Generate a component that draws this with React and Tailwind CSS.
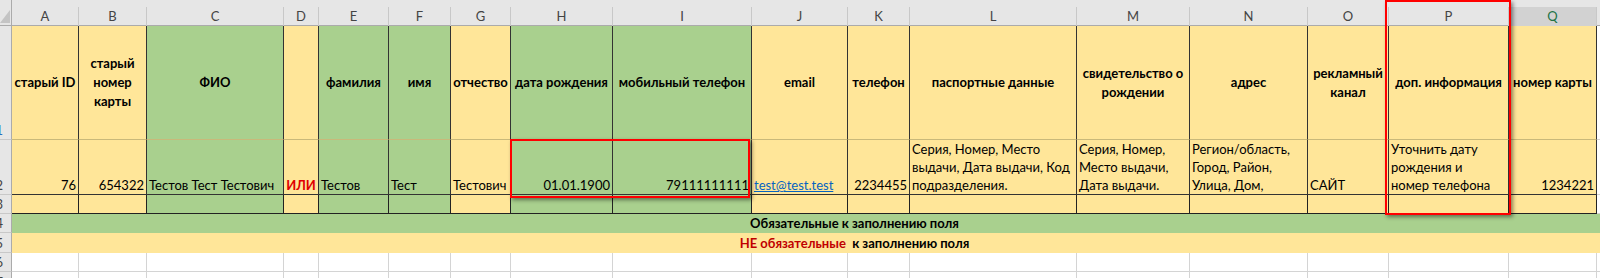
import React from 'react';

const YELLOW = 'bg-[#ffe699]';
const GREEN = 'bg-[#a9d08e]';

// колонки листа: буква, заливка строк 1-3
const columns = [
    { letter: 'A', fill: 'y' },
    { letter: 'B', fill: 'y' },
    { letter: 'C', fill: 'g' },
    { letter: 'D', fill: 'y' },
    { letter: 'E', fill: 'g' },
    { letter: 'F', fill: 'g' },
    { letter: 'G', fill: 'y' },
    { letter: 'H', fill: 'g' },
    { letter: 'I', fill: 'g' },
    { letter: 'J', fill: 'y' },
    { letter: 'K', fill: 'y' },
    { letter: 'L', fill: 'y' },
    { letter: 'M', fill: 'y' },
    { letter: 'N', fill: 'y' },
    { letter: 'O', fill: 'y' },
    { letter: 'P', fill: 'y' },
    { letter: 'Q', fill: 'y' },
    { letter: 'R', fill: 'w' },
];

const headers = [
    ['старый ID'],
    ['старый', 'номер', 'карты'],
    ['ФИО'],
    [],
    ['фамилия'],
    ['имя'],
    ['отчество'],
    ['дата рождения'],
    ['мобильный телефон'],
    ['email'],
    ['телефон'],
    ['паспортные данные'],
    ['свидетельство о', 'рождении'],
    ['адрес'],
    ['рекламный', 'канал'],
    ['доп. информация'],
    ['номер карты'],
    [],
];

const values = [
    { lines: ['76'], align: 'right' },
    { lines: ['654322'], align: 'right' },
    { lines: ['Тестов Тест Тестович'], align: 'left' },
    { lines: ['ИЛИ'], align: 'center', red: true },
    { lines: ['Тестов'], align: 'left' },
    { lines: ['Тест'], align: 'left' },
    { lines: ['Тестович'], align: 'left' },
    { lines: ['01.01.1900'], align: 'right' },
    { lines: ['79111111111'], align: 'right' },
    { lines: ['test@test.test'], align: 'left', link: true },
    { lines: ['2234455'], align: 'right' },
    { lines: ['Серия, Номер, Место', 'выдачи, Дата выдачи, Код', 'подразделения.'], align: 'left' },
    { lines: ['Серия, Номер,', 'Место выдачи,', 'Дата выдачи.'], align: 'left' },
    { lines: ['Регион/область,', 'Город, Район,', 'Улица, Дом,'], align: 'left' },
    { lines: ['САЙТ'], align: 'left' },
    { lines: ['Уточнить дату', 'рождения и', 'номер телефона'], align: 'left' },
    { lines: ['1234221'], align: 'right' },
    { lines: [], align: 'left' },
];

const fillClass = (fill) => (fill === 'y' ? YELLOW : fill === 'g' ? GREEN : 'bg-white');

const alignClass = {
    left: 'items-start text-left',
    right: 'items-end text-right',
    center: 'items-center text-center',
};

const RowNumber = ({ n, blue }) => (
    <div className="bg-[#e6e6e6] border-r border-b border-r-[#ababab] border-b-[#c8c8c8] flex justify-end items-end pr-[8px] overflow-hidden">
        <span className={`leading-[17px] ${blue ? 'text-[#2a6ebb]' : 'text-[#444]'}`}>{n}</span>
    </div>
);

const App = () => {
    return (
        <div className="w-[1600px] h-[278px] overflow-hidden bg-white relative font-['Lato','Open_Sans',sans-serif] text-[13px] text-black">
            <div className="grid grid-cols-[12px_67px_68px_137px_35px_70px_62px_60px_102px_139px_96px_62px_167px_113px_118px_81px_120px_88px_100px] grid-rows-[26px_114px_55px_19px_19px_20px_19px_20px] w-[1697px]">
                {/* заголовки столбцов */}
                <div className="bg-[#e6e6e6] border-b border-r border-[#ababab] flex items-end">
                    <svg width="11" height="14" viewBox="0 0 11 14" className="mb-[1px]">
                        <polygon points="10,0 10,13 0,13" fill="#c4c4c4" />
                    </svg>
                </div>
                {columns.map((col) =>
                    col.letter === 'Q' ? (
                        <div key={col.letter} className="bg-[#e6e6e6] flex flex-col border-b-2 border-[#217346]">
                            <div className="mt-[7px] flex-1 bg-[#d2d2d2] border-r border-[#c8c8c8] flex items-center justify-center text-[#217346]">
                                {col.letter}
                            </div>
                        </div>
                    ) : (
                        <div key={col.letter} className="bg-[#e6e6e6] flex flex-col border-b border-[#ababab]">
                            <div className="mt-[7px] flex-1 border-r border-[#c8c8c8] flex items-center justify-center text-[#444]">
                                {col.letter}
                            </div>
                        </div>
                    )
                )}

                {/* строка 1: шапка таблицы */}
                <RowNumber n="1" blue />
                {columns.map((col, i) => (
                    <div
                        key={'h' + col.letter}
                        className={`${fillClass(col.fill)} ${col.fill === 'w' ? 'border-r border-b border-[#d4d4d4]' : 'border-r border-r-[#333] border-b border-b-[#c9b97a]'} flex flex-col items-center justify-center text-center font-bold leading-[19px] whitespace-nowrap overflow-hidden`}
                    >
                        {headers[i].map((t) => (
                            <div key={t}>{t}</div>
                        ))}
                    </div>
                ))}

                {/* строка 2: пример данных */}
                <RowNumber n="2" />
                {columns.map((col, i) => {
                    const v = values[i];
                    return (
                        <div
                            key={'v' + col.letter}
                            className={`${fillClass(col.fill)} ${col.fill === 'w' ? 'border-r border-b border-[#d4d4d4]' : 'border-r border-b border-[#333]'} flex flex-col justify-end ${alignClass[v.align]} px-[2px] leading-[18px] whitespace-nowrap overflow-hidden`}
                        >
                            {v.lines.map((t) => (
                                <div
                                    key={t}
                                    className={v.red ? 'text-[#e00000] font-bold' : v.link ? 'text-[#0563c1] underline' : ''}
                                >
                                    {t}
                                </div>
                            ))}
                        </div>
                    );
                })}

                {/* строка 3: пустая */}
                <RowNumber n="3" />
                {columns.map((col) => (
                    <div
                        key={'e' + col.letter}
                        className={`${fillClass(col.fill)} ${col.fill === 'w' ? 'border-r border-b border-[#d4d4d4]' : 'border-r border-b border-[#222]'}`}
                    />
                ))}

                {/* строка 4 */}
                <RowNumber n="4" />
                <div className={`${GREEN} [grid-column:2/-1] flex items-center justify-center font-bold leading-none`}>
                    Обязательные к заполнению поля
                </div>

                {/* строка 5 */}
                <RowNumber n="5" />
                <div className={`${YELLOW} [grid-column:2/-1] flex items-center justify-center font-bold leading-none whitespace-pre`}>
                    <span className="text-[#c00000]">НЕ обязательные </span> к заполнению поля
                </div>

                {/* строки 6-7 */}
                {['6', '7'].map((n) => (
                    <React.Fragment key={n}>
                        <RowNumber n={n} />
                        {columns.map((col) => (
                            <div key={n + col.letter} className="bg-white border-r border-b border-[#d4d4d4]" />
                        ))}
                    </React.Fragment>
                ))}
            </div>

            {/* красные рамки-выделения поверх листа */}
            <div className="absolute left-[510px] top-[139px] w-[240px] h-[59px] border-2 border-[#ff0000] shadow-[2px_2px_4px_rgba(0,0,0,0.45)]" />
            <div className="absolute left-[1385px] top-0 w-[126px] h-[215px] border-2 border-[#ff0000] shadow-[2px_2px_4px_rgba(0,0,0,0.45)]" />
        </div>
    );
};

export default App;
